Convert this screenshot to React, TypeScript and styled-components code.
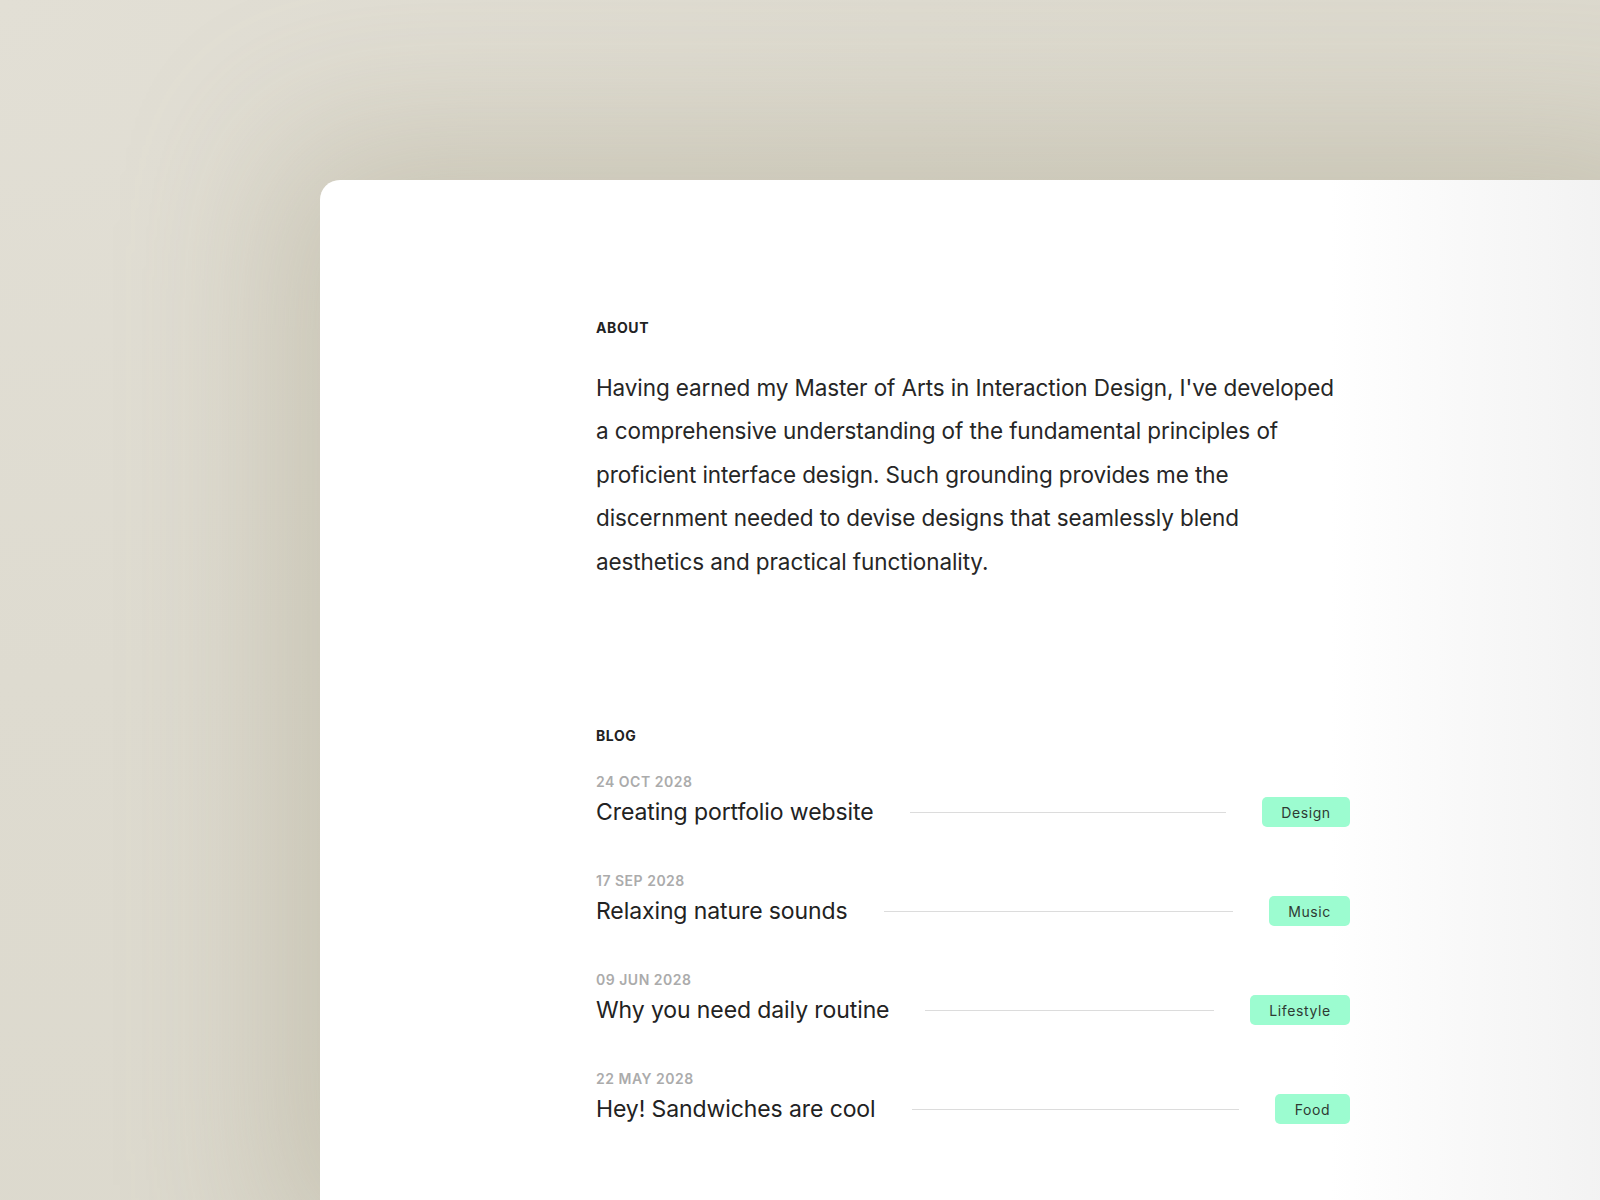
import React from 'react';
import styled, { createGlobalStyle } from 'styled-components';

const GlobalStyle = createGlobalStyle`
  html, body {
    margin: 0;
    padding: 0;
  }

  body {
    background: #dedbd0;
    font-family: Inter, 'Noto Sans', sans-serif;
    color: #222222;
  }
`;

const Page = styled.div`
  width: 1600px;
  height: 1200px;
  overflow: hidden;
  padding: 180px 0 0 320px;
  box-sizing: border-box;
  background: radial-gradient(ellipse at 0% 0%, #e2dfd5 0%, #dedbd0 40%, #dbd8cc 100%);
`;

const Card = styled.main`
  width: 1400px;
  height: 1100px;
  box-sizing: border-box;
  padding: 139px 0 0 276px;
  border-radius: 20px 0 0 0;
  background: linear-gradient(to right, #ffffff 0, #ffffff 1010px, #f2f2f2 1290px);
  box-shadow: -30px -30px 160px 10px rgba(150, 142, 115, 0.32);
`;

const Column = styled.div`
  width: 754px;
  display: flex;
  flex-direction: column;
`;

const Label = styled.h2`
  margin: 0;
  font-size: 14px;
  line-height: 18px;
  font-weight: 700;
  letter-spacing: 0.6px;
  text-transform: uppercase;
  color: #222222;
`;

const About = styled.p`
  margin: 29px 0 0 0;
  width: 750px;
  font-size: 22.5px;
  line-height: 43.4px;
  font-weight: 400;
  letter-spacing: -0.1px;
  color: #262626;
`;

const BlogSection = styled.section`
  margin-top: 144px;
  display: flex;
  flex-direction: column;
`;

const Posts = styled.ul`
  list-style: none;
  margin: 28px 0 0 0;
  padding: 0;
  display: flex;
  flex-direction: column;
  gap: 45px;
`;

const Post = styled.li`
  display: flex;
  flex-direction: column;
  gap: 6px;
`;

const PostDate = styled.span`
  font-size: 14px;
  line-height: 18px;
  font-weight: 600;
  letter-spacing: 0.5px;
  color: #ababab;
`;

const PostRow = styled.div`
  display: flex;
  align-items: center;
  gap: 36px;
  height: 30px;
`;

const PostTitle = styled.span`
  font-size: 23px;
  line-height: 30px;
  letter-spacing: -0.1px;
  color: #222222;
  white-space: nowrap;
`;

const Rule = styled.span`
  flex: 1;
  height: 1px;
  background: #dcdcdc;
`;

const Tag = styled.span<{ $w: number }>`
  flex: none;
  width: ${(p) => p.$w}px;
  height: 30px;
  display: flex;
  align-items: center;
  justify-content: center;
  border-radius: 5px;
  background: #9cfcd0;
  font-size: 14px;
  letter-spacing: 0.6px;
  color: #2e3a33;
`;

const posts = [
  { date: '24 Oct 2028', title: 'Creating portfolio website', tag: 'Design', w: 88 },
  { date: '17 Sep 2028', title: 'Relaxing nature sounds', tag: 'Music', w: 81 },
  { date: '09 Jun 2028', title: 'Why you need daily routine', tag: 'Lifestyle', w: 100 },
  { date: '22 May 2028', title: 'Hey! Sandwiches are cool', tag: 'Food', w: 75 },
];

const App = () => {
  return (
    <>
      <GlobalStyle />
      <Page>
        <Card>
          <Column>
            <section>
              <Label>About</Label>
              <About>
                Having earned my Master of Arts in Interaction Design, I've developed a
                comprehensive understanding of the fundamental principles of proficient
                interface design. Such grounding provides me the discernment needed to
                devise designs that seamlessly blend aesthetics and practical functionality.
              </About>
            </section>

            <BlogSection>
              <Label>Blog</Label>
              <Posts>
                {posts.map((p) => (
                  <Post key={p.title}>
                    <PostDate>{p.date.toUpperCase()}</PostDate>
                    <PostRow>
                      <PostTitle>{p.title}</PostTitle>
                      <Rule />
                      <Tag $w={p.w}>{p.tag}</Tag>
                    </PostRow>
                  </Post>
                ))}
              </Posts>
            </BlogSection>
          </Column>
        </Card>
      </Page>
    </>
  );
};

export default App;
